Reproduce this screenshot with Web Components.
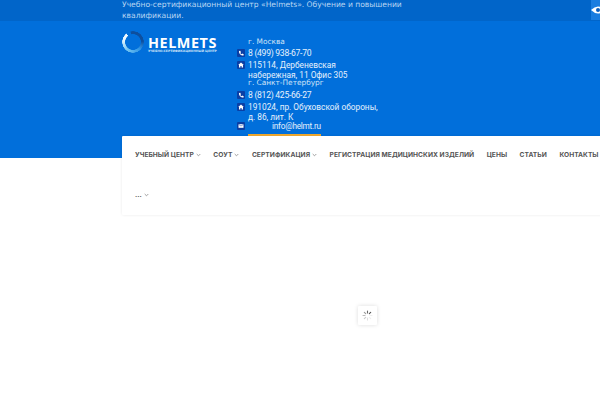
<!DOCTYPE html>
<html><head><meta charset="utf-8">
<style>
html,body{margin:0;padding:0;background:#fff;overflow:hidden;width:600px;height:400px}
</style></head><body>
<site-page></site-page>
<template id="t-page">
<style>
:host{display:block;width:600px;height:400px;position:relative;overflow:hidden;background:#fff;font-family:"Roboto",sans-serif}
.hero{height:158px;background:#016fdb}
.card-wrap{margin-top:-22px;padding-left:122px}
</style>
<div class="hero">
 <top-bar>Учебно-сертификационный центр «Helmets». Обучение и повышении<br>квалификации.</top-bar>
 <site-head></site-head>
</div>
<div class="card-wrap"><main-menu></main-menu></div>
<page-spinner></page-spinner>
</template>

<template id="t-top">
<style>
:host{display:flow-root;height:21px;background:#0165c9;position:relative;box-sizing:border-box;padding:0 0 0 122px;color:#b9d6f3;font:7.6px/11px "DejaVu Sans",sans-serif}
.t{width:240px;margin-top:-1px;white-space:nowrap}
.eye{position:absolute;right:0;top:0;width:9px;height:20px;background:#1a7de0;display:flex;align-items:center;overflow:hidden}
svg{display:block;flex:none}
</style>
<div class="t"><slot></slot></div>
<div class="eye"><svg width="14" height="10" viewBox="0 0 14 10"><path d="M0 5Q7-2 14 5Q7 12 0 5Z" fill="#fff"/><circle cx="7" cy="5" r="2" fill="#0b5fc0"/></svg></div>
</template>

<template id="t-head">
<style>
:host{display:flex;padding:10px 0 0 122px;align-items:flex-start}
.logo{width:115px;flex:none;display:flex;gap:4px;align-items:flex-start}
.ring{width:22px;height:22px;flex:none;border-radius:50%;background:conic-gradient(from 0deg,#0d4f9e 0deg,#0d4f9e 85deg,#2f95e6 135deg,#72c4f0 215deg,#eaf7ff 285deg,#f2faff 322deg,transparent 323deg,transparent 345deg,#0d4f9e 346deg);-webkit-mask:radial-gradient(circle,transparent 7.6px,#000 8.1px,#000 10.6px,transparent 11px);mask:radial-gradient(circle,transparent 7.6px,#000 8.1px,#000 10.6px,transparent 11px)}
.txt{padding-top:5px;color:#fff}
.name{font:700 14.4px/13px "Open Sans","DejaVu Sans",sans-serif;letter-spacing:.55px;color:#fff}
.sub{font:700 3.05px/5px "DejaVu Sans",sans-serif;color:#cfe4f8;white-space:nowrap}
.contacts{padding-top:6px;flex:none;width:150px}
</style>
<div class="logo">
 <div class="ring"></div>
 <div class="txt"><div class="name">HELMETS</div><div class="sub">УЧЕБНО-СЕРТИФИКАЦИОННЫЙ ЦЕНТР</div></div>
</div>
<div class="contacts">
 <contact-row kind="city">г. Москва</contact-row>
 <contact-row kind="phone">8 (499) 938-67-70</contact-row>
 <contact-row kind="home" style="margin-top:1px">115114, Дербеневская<br>набережная, 11 Офис 305</contact-row>
 <contact-row kind="city" style="margin-top:-2px">г. Санкт-Петербург</contact-row>
 <contact-row kind="phone" style="margin-top:1px">8 (812) 425-66-27</contact-row>
 <contact-row kind="home" style="margin-top:1px">191024, пр. Обуховской обороны,<br>д. 86, лит. К</contact-row>
 <contact-row kind="mail" style="margin-top:-2px">info@helmt.ru</contact-row>
</div>
</template>

<template id="t-row">
<style>
:host{display:flex;align-items:flex-start;color:#e6f1fc;font:400 8.3px/10px "Roboto",sans-serif;white-space:nowrap;width:150px}
:host([kind=city]){font:400 7.4px/10px "DejaVu Sans",sans-serif;color:#cfe3f7;padding-left:11px}
:host([kind=phone]){font-size:8.6px;line-height:12px;letter-spacing:-.28px}
:host([kind=mail]){line-height:12px;font-size:8.2px;letter-spacing:-.2px}
.i{width:8px;height:8px;border-radius:1px;background:#0a3fa5;margin:1px 3px 0 0;flex:none;display:flex;align-items:center;justify-content:center}
:host([kind=phone]) .i,:host([kind=mail]) .i{margin-top:2px}
:host([kind=city]) .i{display:none}
:host([kind=mail]) .s{padding-left:24px}
.bar{display:none}
:host([kind=mail]) .bar{display:block;position:absolute;left:248px;top:134px;width:73px;height:2px;background:#f0a92f}
svg{display:block}
</style>
<span class="i"><svg width="6" height="6" viewBox="0 0 6 6"></svg></span><span class="s"><slot></slot></span><div class="bar"></div>
</template>

<template id="t-menu">
<style>
:host{display:block;width:500px;height:79px;background:#fff;box-shadow:0 0 3px rgba(0,0,0,.09);border-radius:1px;box-sizing:border-box;position:relative}
.row{display:flex;align-items:flex-start;padding:13px 0 0 13px;height:40px;box-sizing:border-box;gap:12.5px;white-space:nowrap}
.row2{display:flex;align-items:flex-start;padding:13px 0 0 13px}
</style>
<div class="row">
 <menu-item arrow="1">УЧЕБНЫЙ ЦЕНТР</menu-item>
 <menu-item arrow="1">СОУТ</menu-item>
 <menu-item arrow="1">СЕРТИФИКАЦИЯ</menu-item>
 <menu-item>РЕГИСТРАЦИЯ МЕДИЦИНСКИХ ИЗДЕЛИЙ</menu-item>
 <menu-item>ЦЕНЫ</menu-item>
 <menu-item>СТАТЬИ</menu-item>
 <menu-item>КОНТАКТЫ</menu-item>
</div>
<div class="row2"><menu-item arrow="1">...</menu-item></div>
</template>

<template id="t-item">
<style>
:host{display:inline-flex;align-items:center;gap:2px;color:#555;font:700 6.65px/12px "Inter",sans-serif;letter-spacing:.05px}
svg{display:none;flex:none}
:host([arrow]) svg{display:block}
</style>
<slot></slot><svg width="5" height="4" viewBox="0 0 5 4" fill="none"><path d="M.7 1L2.5 2.8 4.3 1" stroke="#888" stroke-width=".8"/></svg>
</template>

<template id="t-spin">
<style>
:host{display:flex;position:absolute;left:358px;top:306px;width:19px;height:19px;background:#fff;box-shadow:0 0 4px rgba(0,0,0,.14);align-items:center;justify-content:center;border-radius:1px}
svg{display:block}
</style>
<svg width="11" height="11" viewBox="0 0 11 11" stroke-width="1.1" stroke-linecap="round" fill="none">
<path d="M5.5 1V3" stroke="#666"/><path d="M8.7 2.3L7.3 3.7" stroke="#555"/><path d="M10 5.5H8" stroke="#eee"/><path d="M8.7 8.7L7.3 7.3" stroke="#eee"/><path d="M5.5 10V8" stroke="#ddd"/><path d="M2.3 8.7L3.7 7.3" stroke="#ccc"/><path d="M1 5.5H3" stroke="#bbb"/><path d="M2.3 2.3L3.7 3.7" stroke="#999"/></svg>
</template>

<script>
const ICONS={phone:'<path d="M1 1L2.2.8 3 2.3 2.3 3C2.6 3.6 3 4 3.7 4.3L4.4 3.6 5.8 4.5 5.5 5.6C3 5.8.6 3.4 1 1Z" fill="#fff"/>',
home:'<path d="M3 .6L5.8 3H5V5.4H3.6V4H2.4V5.4H1V3H.2Z" fill="#fff"/>',
mail:'<path d="M.5 1.2H5.5V4.8H.5Z" fill="#fff"/><path d="M.5 1.4L3 3 5.500 1.4" stroke="#0a3fa5" stroke-width=".5" fill="none"/>'};
function def(name,tpl,extra){customElements.define(name,class extends HTMLElement{
 constructor(){super();this.attachShadow({mode:'open'}).appendChild(document.getElementById(tpl).content.cloneNode(true));}
 connectedCallback(){if(extra)extra(this);}
});}
def('site-page','t-page');def('top-bar','t-top');def('site-head','t-head');
def('contact-row','t-row',el=>{const k=el.getAttribute('kind');if(ICONS[k])el.shadowRoot.querySelector('svg').innerHTML=ICONS[k];});
def('main-menu','t-menu');def('menu-item','t-item');def('page-spinner','t-spin');
</script>
</body></html>
